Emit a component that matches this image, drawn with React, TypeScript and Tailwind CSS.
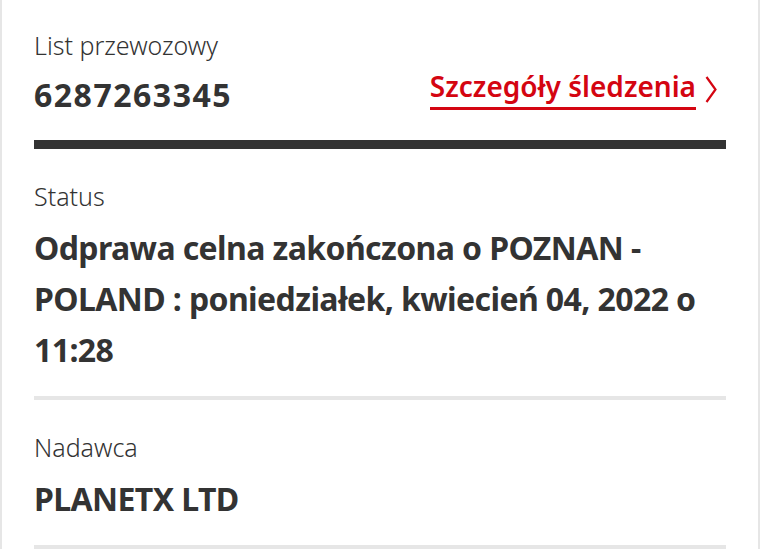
import React from "react";

const font = { fontFamily: '"Noto Sans", "Open Sans", sans-serif' };

function Chevron() {
  return (
    <svg width="12" height="27" viewBox="0 0 12 27" fill="none" className="shrink-0">
      <polyline points="1.5,1 10.5,13.5 1.5,26" stroke="#d40511" strokeWidth="2.2" />
    </svg>
  );
}

function Field({ label, children }: { label: string; children: React.ReactNode }) {
  return (
    <div className="pt-[31px] pb-[21px] border-b-4 border-[#e6e6e6]">
      <div className="text-[25px] leading-[32px] font-light text-[#333]">{label}</div>
      <div className="mt-[10px] text-[32px] leading-[51px] font-bold tracking-[-0.6px] text-[#333]">
        {children}
      </div>
    </div>
  );
}

export default function App() {
  return (
    <div className="w-[760px] h-[549px] overflow-hidden bg-white" style={font}>
      <div className="min-h-full border-x-2 border-[#e6e6e6] px-8">
        {/* Waybill */}
        <div className="pt-[29px] pb-[20px] border-b-[9px] border-[#333]">
          <div className="text-[25px] leading-[32px] font-light text-[#333]">List przewozowy</div>
          <div className="mt-2 flex items-end justify-between">
            <div className="text-[32px] leading-[51px] font-bold tracking-[1.5px] text-[#333]">6287263345</div>
            <a href="#" className="flex items-center gap-[9px] mr-[9px] mb-[10px] text-[#d40511]">
              <span className="text-[28px] leading-[34px] font-semibold border-b-[3px] border-[#d40511] pb-[4px]">
                Szczegóły śledzenia
              </span>
              <Chevron />
            </a>
          </div>
        </div>

        <Field label="Status">
          Odprawa celna zakończona o POZNAN - POLAND : poniedziałek, kwiecień 04, 2022 o 11:28
        </Field>

        <Field label="Nadawca">PLANETX LTD</Field>
      </div>
    </div>
  );
}
